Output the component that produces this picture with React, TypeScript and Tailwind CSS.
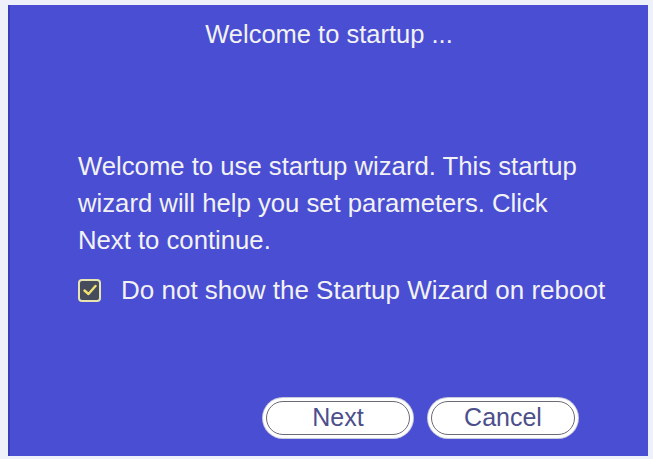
import { useState } from "react";

function PillButton({ label }: { label: string }) {
  return (
    <button className="w-[150px] h-[40px] rounded-full bg-white p-[3px] shadow-[0_0_0_1px_#c8cadc]">
      <span className="flex h-full w-full items-center justify-center rounded-full border border-[#6a6a78] pb-[1px] text-[25px] leading-none text-[#4c4f8c]">
        {label}
      </span>
    </button>
  );
}

export default function App() {
  const [checked, setChecked] = useState(true);

  return (
    <div className="w-[653px] h-[459px] bg-[#eef0fa] pl-[8px] pr-[5px] pt-[5px] pb-[3px] font-['Liberation_Sans',Arial,sans-serif]">
      <div className="flex h-full flex-col border-l-2 border-[#3a3eb8] bg-[#4a4ed2] text-[#f2f2f4]">
        <div className="pt-[14px] text-center text-[25.5px] leading-[30px]">Welcome to startup ...</div>

        <div className="mt-[99px] pl-[68px] text-[25.7px] leading-[37px]">
          <p>Welcome to use startup wizard. This startup</p>
          <p>wizard will help you set parameters. Click</p>
          <p>Next to continue.</p>
        </div>

        <label className="mt-[16px] flex items-center gap-[20px] pl-[68px] text-[26px] leading-[30px]">
          <button
            onClick={() => setChecked(!checked)}
            className="flex h-[23px] w-[23px] items-center justify-center rounded-[4px] border-2 border-[#e8e4b0] bg-[#464c5c]"
          >
            {checked && (
              <svg width="14" height="12" viewBox="0 0 14 12">
                <path d="M1.5 6.5 L5.5 10 L12.5 2" fill="none" stroke="#f0e070" strokeWidth="2.4" strokeLinecap="round" strokeLinejoin="round" />
              </svg>
            )}
          </button>
          <span>Do not show the Startup Wizard on reboot</span>
        </label>

        <div className="mt-auto mb-[18px] flex justify-end gap-[15px] pr-[70px]">
          <PillButton label="Next" />
          <PillButton label="Cancel" />
        </div>
      </div>
    </div>
  );
}
